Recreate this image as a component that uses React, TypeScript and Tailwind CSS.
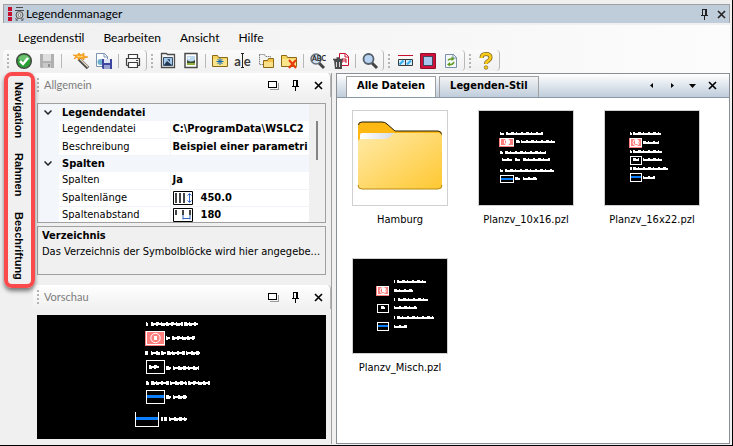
import React, { useState } from "react";

type Mark = [number, number, number];
type Box = { x: number; y: number; w: number; h: number; kind: "pink" | "empty" | "blue" | "open" };

const alleDateien = [
  { name: "Hamburg", art: "folder" },
  { name: "Planzv_10x16.pzl", art: "a" },
  { name: "Planzv_16x22.pzl", art: "b" },
  { name: "Planzv_Misch.pzl", art: "c" },
];

// x, y, width of each small line in the legend drawings
const legends: Record<string, { marks: Mark[]; boxes: Box[] }> = {
  preview: {
    marks: [
      [109, 8, 2], [114, 8, 32], [147, 8, 14],
      [129, 22, 4], [135, 22, 23],
      [108, 37, 3], [114, 37, 9], [124, 37, 5], [130, 37, 18], [149, 37, 14],
      [112, 51, 10], [129, 52, 5], [136, 52, 26],
      [109, 67, 3], [114, 67, 18], [133, 67, 17], [151, 67, 22],
      [129, 81, 5], [136, 81, 14],
      [124, 103, 2], [127, 103, 3], [132, 103, 18],
    ],
    boxes: [
      { x: 109, y: 16, w: 19, h: 14, kind: "pink" },
      { x: 109, y: 45, w: 19, h: 14, kind: "empty" },
      { x: 109, y: 75, w: 19, h: 14, kind: "blue" },
      { x: 98, y: 97, w: 24, h: 15, kind: "open" },
    ],
  },
  a: {
    marks: [
      [21, 22, 4], [27, 22, 37], [37, 30, 4], [42, 30, 34],
      [21, 41, 3], [26, 41, 41], [23, 48, 10], [36, 48, 5], [44, 48, 27],
      [21, 59, 3], [26, 59, 49], [36, 67, 5], [44, 67, 14],
    ],
    boxes: [
      { x: 21, y: 27, w: 14, h: 8, kind: "pink" },
      { x: 21, y: 64, w: 14, h: 8, kind: "blue" },
    ],
  },
  b: {
    marks: [
      [25, 22, 2], [28, 22, 28], [38, 31, 16],
      [25, 40, 2], [28, 40, 29], [28, 48, 6], [38, 48, 19],
      [25, 57, 2], [28, 57, 35], [38, 66, 12],
    ],
    boxes: [
      { x: 25, y: 27, w: 12, h: 9, kind: "pink" },
      { x: 25, y: 45, w: 12, h: 9, kind: "empty" },
      { x: 25, y: 62, w: 12, h: 9, kind: "blue" },
    ],
  },
  c: {
    marks: [
      [41, 22, 1], [44, 22, 29], [41, 31, 19],
      [41, 40, 1], [45, 40, 30], [28, 48, 4], [41, 48, 23],
      [41, 58, 1], [44, 58, 37], [41, 67, 13],
    ],
    boxes: [
      { x: 24, y: 27, w: 12, h: 9, kind: "pink" },
      { x: 24, y: 45, w: 12, h: 9, kind: "empty" },
      { x: 24, y: 63, w: 12, h: 9, kind: "blue" },
    ],
  },
};

function LegendArt({ id, width, height }: { id: string; width: number; height: number }) {
  const { marks, boxes } = legends[id];
  const large = id === "preview";
  return (
    <svg width={width} height={height} viewBox={`0 0 ${width} ${height}`} shapeRendering="crispEdges" className="block">
      {boxes.map((b, i) => (
        <g key={i}>
          {b.kind === "pink" && (
            <>
              <rect x={b.x - 1} y={b.y} width={b.w + 1} height={b.h + 1} fill="#ff7f7f" />
              <ellipse
                cx={b.x + b.w / 2}
                cy={b.y + b.h / 2}
                rx={b.h / 3}
                ry={b.h / 3}
                fill="none"
                stroke="#fff"
                shapeRendering="auto"
              />
              <rect x={b.x + Math.floor(b.w / 2) - 1} y={b.y + Math.floor(b.h / 2) - 2} width={3} height={4} fill="#fff" />
            </>
          )}
          {(b.kind === "blue" || b.kind === "open") && (
            <rect x={b.x} y={b.y + Math.round(b.h / 3)} width={b.w} height={large ? 3 : 2} fill="#0a80ff" />
          )}
          {b.kind === "open" ? (
            <path d={`M${b.x + 0.5} ${b.y}v${b.h - 0.5}h${b.w - 1}v${0.5 - b.h}`} fill="none" stroke="#fff" />
          ) : (
            <rect x={b.x + 0.5} y={b.y + 0.5} width={b.w - 1} height={b.h - 1} fill="none" stroke="#fff" />
          )}
        </g>
      ))}
      {marks.map(([x, y, w], i) => (
        <g key={i} fill="#fff">
          <rect x={x} y={y} width={w} height={2} />
          {Array.from({ length: Math.ceil(w / 5) }, (_, n) => (
            <React.Fragment key={n}>
              <rect x={x + n * 5} y={y - 1} width={Math.min(1 + ((n + i) % 3), w - n * 5)} height={1} />
              {large && <rect x={x + n * 5} y={y + 2} width={Math.min(2 + ((n * 2 + i) % 3), w - n * 5)} height={1} />}
            </React.Fragment>
          ))}
        </g>
      ))}
    </svg>
  );
}

function FolderArt() {
  return (
    <svg width="94" height="94" viewBox="0 0 94 94" className="block">
      <defs>
        <linearGradient id="front" x1="0" y1="0" x2="1" y2="1">
          <stop offset="0" stopColor="#ffeaa8" />
          <stop offset="1" stopColor="#ffc832" />
        </linearGradient>
        <linearGradient id="paper" x1="0" y1="0" x2="1" y2="0">
          <stop offset="0" stopColor="#fff" />
          <stop offset="1" stopColor="#d5dae2" />
        </linearGradient>
      </defs>
      <path d="M5 15q0-4 4-4h20q3 0 5 2l8 7h43q4 0 4 4v50q0 4-4 4H9q-4 0-4-4z" fill="#fdb813" />
      <path d="M5.500 14q0-3 3.500-3h20q3 0 5 2l8 7h43q3.500 0 3.500 4v4" fill="none" stroke="#231a05" />
      <path d="M7 24q0-2 2-2h34l-5 7H7z" fill="url(#paper)" />
      <path d="M5 31q0-3 3-3h23q4 0 6-2l3-3q1-1 4-1h41q4 0 4 3v49q0 4-4 4H9q-4 0-4-4z" fill="url(#front)" />
      <path d="M5 74q0 4 4 4h76q4 0 4-4" fill="none" stroke="#b98a10" />
    </svg>
  );
}

function AppLogo() {
  return (
    <svg width="18" height="16" viewBox="0 0 18 16">
      <path d="M1 1h4v4H1zM1 6h4v4H1zM1 11h4v4H1z" fill="#c8102e" />
      <path d="M9 1.500h7M8 4.500h9" stroke="#4a4a4a" />
      <circle cx="12.500" cy="9" r="3.500" fill="#c9c9c9" stroke="#555" />
      <circle cx="12.500" cy="9" r="1.300" fill="#fff" stroke="#666" strokeWidth=".7" />
      <path d="M9 15l1.500-3M16 15l-1.500-3M8 12.500l3 2M17 12.500l-3 2" stroke="#666" />
    </svg>
  );
}

const smallFolder = (
  <>
    <path d="M1.500 3.500h5l1 2h9v9h-15z" fill="#f6d55e" stroke="#8a6a16" />
    <path d="M2 7h14v7H2z" fill="#fbe58c" />
  </>
);

const icons: Record<string, React.ReactNode> = {
  check: (
    <>
      <circle cx="9" cy="9" r="7.300" fill="#2c9e36" stroke="#444b44" strokeWidth="1.500" />
      <path d="M3 7a6.500 6.500 0 0 1 12 0q-6 3-12 0z" fill="#6cc470" />
      <path d="M5 9l3 3 5-6" fill="none" stroke="#fff" strokeWidth="2.500" />
    </>
  ),
  save: (
    <>
      <path d="M2 2h14v14H3l-1-1z" fill="#b0b0b0" />
      <path d="M5 2h8v7H5z" fill="#dedede" />
      <path d="M5 11h8v5H5z" fill="#c9c9c9" />
      <path d="M10 12h2v3h-2z" fill="#929292" />
    </>
  ),
  wand: (
    <>
      <path d="M7 7l9 9" stroke="#4d4d4d" strokeWidth="3.500" />
      <path d="M8 7l8 8" stroke="#e8dcc4" strokeWidth="1.200" />
      <path d="M1 3l4 0 2-2 2 2 3-2 0 3 4 1-4 1 0 2-3-2-3 2 0-3-4 2 2-3z" fill="#fba726" stroke="#ea8a0a" strokeWidth=".6" />
      <path d="M5 4l3 1 3-1" fill="none" stroke="#ffe07a" />
    </>
  ),
  docSave: (
    <>
      <path d="M1.500 1.500h8l3 3v10h-11z" fill="#fff" stroke="#7d94ae" />
      <path d="M9 1v4h4" fill="none" stroke="#7d94ae" />
      <circle cx="5.500" cy="10" r="3" fill="#6fb0cf" />
      <path d="M7 7h10v10H8l-1-1z" fill="#3c46a0" />
      <path d="M9 7h6v4H9z" fill="#dfe5f5" />
      <path d="M9 13h6v4H9z" fill="#9aa3cf" />
    </>
  ),
  print: (
    <g fill="none" stroke="#3f3f3f" strokeWidth="1.200">
      <path d="M4.500 6.500v-4h9v4" fill="#fff" />
      <path d="M2.500 13.500v-7h13v7h-2" />
      <path d="M2.500 13.500h2" />
      <path d="M4.500 10.500h9v5h-9z" fill="#fff" />
      <path d="M12 8.500h2" />
    </g>
  ),
  folderImage: (
    <>
      <path d="M2.500 1.500h5l1 1h7v13h-13z" fill="#f5f5f5" stroke="#4b4b4b" strokeWidth="1.300" />
      <path d="M4.500 5.500h9v8h-9z" fill="#a6c9ea" stroke="#35506c" />
      <path d="M5 13l3-4 5 4z" fill="#22384f" />
      <path d="M8 7h3v3z" fill="#35506c" />
    </>
  ),
  image: (
    <>
      <path d="M3 1.500h12v14H3z" fill="#fff" stroke="#4b4b4b" strokeWidth="1.500" />
      <path d="M5 4h8v9H5z" fill="#bcd8ef" />
      <path d="M5 8q4 3 8 0v4H5z" fill="#3b4b3b" />
      <path d="M5 11h8v2H5z" fill="#8fae3c" />
      <circle cx="7" cy="6" r="1" fill="#fff" />
    </>
  ),
  folderNew: (
    <>
      {smallFolder}
      <path d="M9 6v7M5.500 9.500h7M6.500 7l5 5M11.500 7l-5 5" stroke="#1467b3" />
    </>
  ),
  folderCopy: (
    <>
      <path d="M2.500 2.500h5l1 2h5v8h-11z" fill="#f3f3f3" stroke="#555" strokeDasharray="1 1" />
      <path d="M6.500 8.500h4l1-2h5v9h-10z" fill="#f3c34b" stroke="#8a6a16" />
      <path d="M7 10h9v5H7z" fill="#fbe08a" />
    </>
  ),
  folderDelete: (
    <>
      {smallFolder}
      <path d="M9 8l7 8M16 8l-7 8" stroke="#e8380c" strokeWidth="2" />
    </>
  ),
  trash: (
    <>
      <path d="M7.500 1.500h6l3 3v9h-9z" fill="#fff" stroke="#c8102e" />
      <path d="M13 1.500v3.500h3M10 11V7h4v4M10 9h4" fill="none" stroke="#c8102e" />
      <path d="M2 8h8v9H3z" fill="#4a4a4a" />
      <path d="M1 7.500h10M4.500 6h3" stroke="#4a4a4a" strokeWidth="1.500" />
      <path d="M4.500 10v5M7.500 10v5" stroke="#d6d6d6" />
    </>
  ),
  search: (
    <>
      <path d="M11 11l5 5" stroke="#444" strokeWidth="3" />
      <circle cx="7.500" cy="7" r="5" fill="#b7d3f1" stroke="#56606b" strokeWidth="1.800" />
    </>
  ),
  columns: (
    <>
      <path d="M2 3.500h15" stroke="#c8102e" />
      <path d="M2.500 7.500h14v6h-14zM9.500 7.500v6" fill="#d6eefc" stroke="#3a3a3a" />
      <path d="M3.500 12.500l4-4M11 12.500l4-4" stroke="#35aef0" strokeWidth="2" />
    </>
  ),
  frame: (
    <>
      <rect x="1" y="1" width="16" height="16" rx="1" fill="#8e0f28" />
      <rect x="2" y="2" width="14" height="14" fill="#d0103a" />
      <rect x="4.500" y="4.500" width="9" height="9" fill="#a9c8ee" stroke="#404a5c" />
    </>
  ),
  refresh: (
    <>
      <path d="M3.500 2.500h8l3 3v10h-11z" fill="#f4f8fc" stroke="#7890a8" />
      <path d="M11 2v4h4" fill="none" stroke="#7890a8" />
      <path d="M6 8.500q1-2 4-1.500M12 10q-1 3-4.500 2.500" fill="none" stroke="#5f9c1c" strokeWidth="1.500" />
      <path d="M9.500 4.500l3 2.500-3 2zM8 10l-3 2.500 3 2z" fill="#5f9c1c" />
    </>
  ),
  help: (
    <>
      <path d="M4.500 6q0-4 4.500-4t4.500 3.500q0 2-2.500 3.500-2 1-2 3" fill="none" stroke="#7a6a20" strokeWidth="4" />
      <path d="M4.500 6q0-4 4.500-4t4.500 3.500q0 2-2.500 3.500-2 1-2 3" fill="none" stroke="#fccb1a" strokeWidth="2.600" />
      <circle cx="9" cy="15.500" r="1.800" fill="#fccb1a" stroke="#7a6a20" strokeWidth=".7" />
    </>
  ),
};

const toolGroups: string[][] = [
  ["check", "save", "|", " ", "wand", "docSave", "|", "print"],
  ["folderImage", "image", "|", "folderNew", "rename", "folderCopy", "folderDelete", "|", "spell", "trash", "|", "search"],
  ["columns", "frame", "refresh"],
  ["help"],
];

function ToolIcon({ name }: { name: string }) {
  if (name === "rename") {
    return (
      <span className="flex items-center text-[13px] font-bold leading-4 text-[#3c3c3c]">
        a
        <svg width="3" height="15" viewBox="0 0 3 15">
          <path d="M0 .5h3M0 14.500h3M1.500 1v13" stroke="#222" />
        </svg>
        e
      </span>
    );
  }
  return (
    <svg width="18" height="18" viewBox="0 0 18 18">
      {name === "spell" ? (
        <>
          <path d="M10 11l5 5" stroke="#444" strokeWidth="3" />
          <circle cx="7" cy="7" r="5" fill="#cfe0f1" stroke="#66707a" strokeWidth="1.500" />
          <text x="3" y="9" fontSize="7" fontWeight="700" fill="#222">ABC</text>
        </>
      ) : (
        icons[name]
      )}
    </svg>
  );
}

function Grip() {
  return (
    <div className="flex w-[9px] shrink-0 flex-col items-center justify-center gap-[2px]">
      {[0, 1, 2, 3].map((n) => (
        <span key={n} className="h-[2px] w-[2px] bg-[#b4b4b4]" />
      ))}
    </div>
  );
}

function CloseIcon() {
  return (
    <svg width="9" height="9" viewBox="0 0 9 9">
      <path d="M1 1l7 7M8 1l-7 7" stroke="currentColor" strokeWidth="1.600" />
    </svg>
  );
}

function PinIcon() {
  return (
    <svg width="9" height="11" viewBox="0 0 9 11" shapeRendering="crispEdges">
      <path d="M2.500 6V.5h4V6M1 6.500h7M4.500 7v4M5.500 1v5" fill="none" stroke="currentColor" />
    </svg>
  );
}

function PanelHeader({ title }: { title: string }) {
  return (
    <div className="flex h-6 items-stretch rounded-t border-r border-[#b4b4b4] bg-gradient-to-b from-white to-[#f0f0f0] pr-[7px]">
      <Grip />
      <h2 className="flex-1 self-center pl-[2px] text-[11px] text-[#7c7c7c]">{title}</h2>
      <div className="flex items-center gap-[12px]">
        <button type="button" aria-label="Maximieren">
          <svg width="11" height="9" viewBox="0 0 11 9" shapeRendering="crispEdges" className="block">
            <path d="M2 8.500h8.500V2" fill="none" stroke="#999" />
            <path d="M.5.5h8v6h-8z" fill="#fff" stroke="#000" />
          </svg>
        </button>
        <button type="button" aria-label="Anheften"><PinIcon /></button>
        <button type="button" aria-label="Schließen" className="ml-[2px]"><CloseIcon /></button>
      </div>
    </div>
  );
}

function LengthIcon() {
  return (
    <svg width="20" height="14" viewBox="0 0 20 14" className="block shrink-0">
      <path d="M.5.5h19v13H.5z" fill="#fff" stroke="#000" />
      <path d="M3 2v10M7 2v10M11 2v10" stroke="#444" strokeWidth="2" />
      <path d="M16.500 3v8M14.500 4.500l2-2 2 2M14.500 9.500l2 2 2-2" fill="none" stroke="#2f66c8" />
    </svg>
  );
}

function DistanceIcon() {
  return (
    <svg width="20" height="14" viewBox="0 0 20 14" className="block shrink-0">
      <path d="M.5.5h19v13H.5z" fill="#fff" stroke="#000" />
      <path d="M3 2v5M10 2v5M17 2v5" stroke="#444" strokeWidth="2" />
      <path d="M10 7v4.500M17 7v4.500M10 10.500h7" fill="none" stroke="#2f66c8" />
    </svg>
  );
}

const properties: { group: string; rows: { name: string; value: string; icon?: React.ReactNode }[] }[] = [
  {
    group: "Legendendatei",
    rows: [
      { name: "Legendendatei", value: "C:\\ProgramData\\WSLC2" },
      { name: "Beschreibung", value: "Beispiel einer parametri" },
    ],
  },
  {
    group: "Spalten",
    rows: [
      { name: "Spalten", value: "Ja" },
      { name: "Spaltenlänge", value: "450.0", icon: <LengthIcon /> },
      { name: "Spaltenabstand", value: "180", icon: <DistanceIcon /> },
    ],
  },
];

function PropertyGrid() {
  return (
    <div className="flex h-[120px] overflow-hidden border border-[#a0a0a0] bg-white">
      <div className="min-w-0 flex-1">
        <table className="w-full table-fixed border-collapse text-left font-['DejaVu_Sans_Condensed','DejaVu_Sans',sans-serif] text-[11px] leading-4">
          <colgroup>
            <col className="w-[21px]" />
            <col className="w-[111px]" />
            <col />
          </colgroup>
          <tbody>
            {properties.map((section) => (
              <React.Fragment key={section.group}>
                <tr className="h-[17px] bg-[#f3f7fc]">
                  <td className="p-0">
                    <button type="button" aria-label={section.group} className="ml-[6px] flex h-4 items-center">
                      <svg width="8" height="5" viewBox="0 0 8 5">
                        <path d="M.5.5L4 4 7.500.5" fill="none" stroke="#222" strokeWidth="1.500" />
                      </svg>
                    </button>
                  </td>
                  <th colSpan={2} className="p-0 pl-[3px] font-bold">{section.group}</th>
                </tr>
                {section.rows.map((row) => (
                  <tr key={row.name} className="h-[17px]">
                    <td className="bg-[#f3f7fc] p-0" />
                    <td className="border-b border-r border-[#f0f3f8] p-0 pl-[3px]">{row.name}</td>
                    <td className="whitespace-nowrap border-b border-[#f0f3f8] p-0 pl-[2px] font-bold">
                      <span className="flex items-center gap-2">
                        {row.icon}
                        {row.value}
                      </span>
                    </td>
                  </tr>
                ))}
              </React.Fragment>
            ))}
          </tbody>
        </table>
      </div>
      <div className="flex w-4 shrink-0 justify-center bg-[#f0f0f0] pt-[17px]">
        <div className="h-[39px] w-[2px] bg-[#858585]" />
      </div>
    </div>
  );
}

export default function App() {
  const [tab, setTab] = useState("Alle Dateien");

  return (
    <div className="relative flex min-h-screen flex-col border-b border-r border-black bg-[#f0f0f0] pb-px pl-[3px] pr-[2px] pt-[4px] font-['Lato','Open_Sans',sans-serif] text-xs text-black">
      <header className="flex h-[19px] items-center border border-b-0 border-[#a0a0a0] bg-[#bfcddb] pl-[3px] pr-[3px]">
        <AppLogo />
        <h1 className="flex-1 pl-[1px] text-xs">Legendenmanager</h1>
        <div className="flex items-center gap-[8px] text-[#222]">
          <button type="button" aria-label="Anheften"><PinIcon /></button>
          <button type="button" aria-label="Schließen"><CloseIcon /></button>
        </div>
      </header>

      <div className="mt-[2px] bg-gradient-to-r from-[#f0f0f0] to-[#fcfcfc]">
        <nav className="flex h-[25px] items-center gap-[19px] pl-[15px]">
          {["Legendenstil", "Bearbeiten", "Ansicht", "Hilfe"].map((item) => (
            <button key={item} type="button">{item}</button>
          ))}
        </nav>
        <div className="flex h-[23px] items-stretch">
          {toolGroups.map((group, i) => (
            <div key={i} className="mb-[2px] flex rounded border-r border-[#b8b8b8] bg-gradient-to-b from-[#fbfbfb] to-[#f0f0f0] pr-[2px]">
              <Grip />
              {group.map((name, n) => {
                if (name === "|") {
                  return (
                    <div key={n} className="flex w-[6px] items-center justify-center">
                      <span className="h-[14px] w-px bg-[#b8b8b8]" />
                    </div>
                  );
                }
                if (name === " ") return <div key={n} className="w-[5px]" />;
                return (
                  <button key={n} type="button" aria-label={name} className="flex w-[23px] items-center justify-center">
                    <ToolIcon name={name} />
                  </button>
                );
              })}
            </div>
          ))}
        </div>
      </div>

      <main className="flex flex-1">
        <nav className="flex w-[30px] shrink-0 flex-col items-center gap-[15px] pl-[2px] pt-[9px] font-['Liberation_Sans',sans-serif] text-[11px] font-bold leading-4">
          {["Navigation", "Rahmen", "Beschriftung"].map((item) => (
            <button key={item} type="button" className="[writing-mode:vertical-rl]">{item}</button>
          ))}
        </nav>

        <section className="flex w-[299px] shrink-0 flex-col border-r border-[#a0a0a0]">
          <PanelHeader title="Allgemein" />
          <div className="mt-[6px] flex flex-col gap-[3px] pl-1 pr-[5px]">
            <PropertyGrid />
            <div className="h-[49px] border border-[#a0a0a0] px-1 pt-[1px] font-['DejaVu_Sans_Condensed','DejaVu_Sans',sans-serif] text-[11px] leading-4">
              <h3 className="font-bold">Verzeichnis</h3>
              <p className="whitespace-nowrap">Das Verzeichnis der Symbolblöcke wird hier angegebe...</p>
            </div>
          </div>
          <div className="mt-[10px]">
            <PanelHeader title="Vorschau" />
          </div>
          <div className="mb-[5px] ml-1 mr-[5px] mt-[6px] flex flex-1 justify-center overflow-hidden bg-black">
            <LegendArt id="preview" width={289} height={123} />
          </div>
        </section>

        <section className="ml-1 flex min-w-0 flex-1 flex-col border border-[#8a8f96] bg-white">
          <div className="flex h-6 items-end border-b border-[#8a97a5] bg-gradient-to-b from-white to-[#bfcddb] pl-[9px] pr-3 font-['DejaVu_Sans_Condensed','DejaVu_Sans',sans-serif]">
            {["Alle Dateien", "Legenden-Stil"].map((item) => (
              <button
                key={item}
                type="button"
                onClick={() => setTab(item)}
                className={`mr-[3px] h-[21px] border border-b-0 border-[#a0a0a0] px-[10px] pb-[3px] text-[11px] font-bold leading-4 ${
                  tab === item ? "bg-white" : "bg-gradient-to-b from-[#f4f4f4] to-[#bfcddb]"
                }`}
              >
                {item}
              </button>
            ))}
            <div className="ml-auto flex items-center gap-[12px] self-center">
              <button type="button" aria-label="Zurück">
                <svg width="9" height="5" viewBox="0 0 9 5"><path d="M6 0v5L3 2.500z" /></svg>
              </button>
              <button type="button" aria-label="Weiter">
                <svg width="9" height="5" viewBox="0 0 9 5"><path d="M3 0v5l3-2.500z" /></svg>
              </button>
              <button type="button" aria-label="Liste">
                <svg width="7" height="4" viewBox="0 0 7 4"><path d="M0 0h7L3.500 4z" /></svg>
              </button>
              <button type="button" aria-label="Schließen"><CloseIcon /></button>
            </div>
          </div>
          <ul className="flex flex-wrap gap-y-[30px] pt-3 font-['DejaVu_Sans_Condensed','DejaVu_Sans',sans-serif] text-[11px] leading-4">
            {alleDateien.map((file) => (
              <li key={file.name} className="w-[126px]">
                <button type="button" className="flex w-full flex-col items-center gap-[6px]">
                  <span className={`border border-[#d0d0d0] ${file.art === "folder" ? "bg-white" : "bg-black"}`}>
                    {file.art === "folder" ? <FolderArt /> : <LegendArt id={file.art} width={94} height={94} />}
                  </span>
                  {file.name}
                </button>
              </li>
            ))}
          </ul>
        </section>
      </main>

      {/* highlight frame around the side tabs */}
      <div className="pointer-events-none absolute left-[4px] top-[72px] h-[216px] w-[31px] rounded-lg border-4 border-[#fa4a4c] shadow-[0_3px_4px_rgba(0,0,0,0.5)]" />
    </div>
  );
}
